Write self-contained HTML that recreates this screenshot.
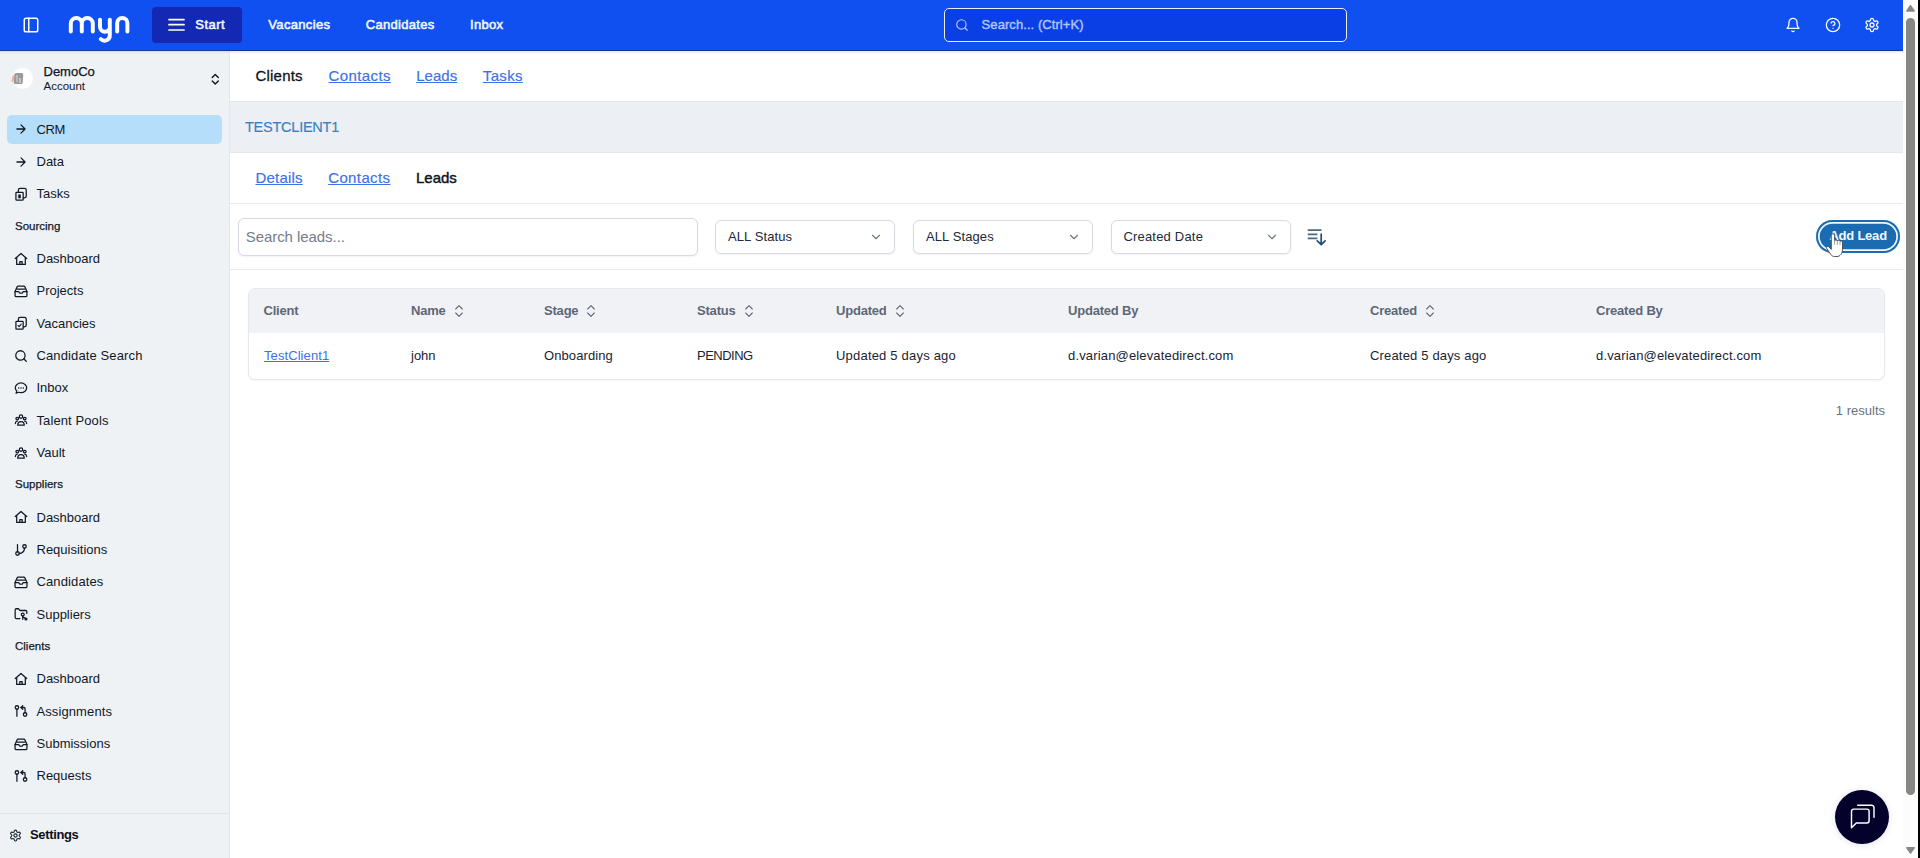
<!DOCTYPE html>
<html lang="en">
<head>
<meta charset="utf-8">
<title>myn - Leads</title>
<style>
*{box-sizing:border-box;margin:0;padding:0}
html,body{width:1920px;height:858px;overflow:hidden;background:#fff}
body{font-family:"Liberation Sans",sans-serif;color:#111827;position:relative;font-size:13px}
a{color:#3c71e8;text-decoration:underline}
.abs{position:absolute}
svg{display:block;overflow:visible}
.ic{fill:none;stroke:currentColor;stroke-linecap:round;stroke-linejoin:round}

/* ---------- top bar ---------- */
#topbar{position:absolute;left:0;top:0;width:1903px;height:51px;background:#1050f0;border-bottom:1px solid #17379a;box-shadow:0 1px 2px rgba(110,140,240,.28);z-index:5;color:#fff}
#topbar .t{position:absolute;white-space:nowrap;line-height:16px;font-size:13px;color:#f3f6ff;-webkit-text-stroke:.55px #f3f6ff}
#startbtn{position:absolute;left:152px;top:7px;width:90px;height:35.5px;border-radius:4px;background:#1429b3}
#gsearch{position:absolute;left:944px;top:8px;width:403px;height:34px;border:1.4px solid #e9efff;border-radius:5px;background:#0a3fe6}
#gsearch span{position:absolute;left:36.600px;letter-spacing:.07px;top:8px;line-height:16px;font-size:13px;color:#b3c6fb;white-space:nowrap;-webkit-text-stroke:.4px #b3c6fb}

/* ---------- sidebar ---------- */
#sidebar{position:absolute;left:0;top:51px;width:230px;height:807px;background:#eef2f5;border-right:1px solid #e4e8ec;color:#0f172a}
#sidebar .nav{position:absolute;left:7px;width:215px;height:28.7px;border-radius:5px}
#sidebar .nav.on{background:#b5defb;height:29.400px}
#sidebar .nav svg{position:absolute;left:7.200px;top:7.500px;width:14px;height:14px;stroke-width:2.150;color:#111827}
#sidebar .nav span{position:absolute;left:29.500px;top:7px;line-height:16px;font-size:13px;white-space:nowrap;color:#111827}
#sidebar .hd{position:absolute;left:15px;line-height:14px;font-size:11.5px;white-space:nowrap;color:#131a28;-webkit-text-stroke:.25px #131a28}
#sbfoot{position:absolute;left:0;top:762px;width:229px;height:45px;border-top:1px solid #dfe3ea}

/* ---------- main ---------- */
#main{position:absolute;left:230px;top:51px;width:1673px;height:807px;background:#fff}
.hline{position:absolute;left:0;width:1673px;height:1px;background:#e8eaee}
.tab{position:absolute;white-space:nowrap;font-size:15px;line-height:20px}
a.tab{-webkit-text-stroke:.18px #3c71e8}

#tband{position:absolute;left:0;top:50px;width:1673px;height:52px;background:#eceff4;border-top:1px solid #e4e7ed;border-bottom:1px solid #e4e7ed}
.inp{position:absolute;border:1px solid #d7dae0;border-radius:6px;background:#fff;box-shadow:0 1px 2px rgba(16,24,40,.05)}
.sel span{position:absolute;left:12px;top:7.500px;line-height:16px;font-size:13px;white-space:nowrap;color:#222938;letter-spacing:.1px}
.sel svg{position:absolute;right:11.500px;top:8.500px;width:14px;height:14px;stroke-width:1.900;color:#6b7380}
#tbl{position:absolute;left:18px;top:237px;width:1637px;height:92px;border:1px solid #e6e8ec;border-radius:7px;overflow:hidden;box-shadow:0 1px 2px rgba(16,24,40,.05);background:#fff}
#tbl .thead{position:absolute;left:0;top:0;width:100%;height:44px;background:#f1f2f5}
#tbl .th{position:absolute;top:13.500px;line-height:16px;font-size:13px;font-weight:bold;color:#5e6776;white-space:nowrap;letter-spacing:-.2px}
#tbl .th svg{position:absolute;left:100%;margin-left:5px;top:0;width:16px;height:16px;stroke-width:1.600;color:#5e6776}
#tbl .td{position:absolute;top:58.500px;line-height:16px;font-size:13px;color:#1c2330;white-space:nowrap}
</style>
</head>
<body>

<!-- ================= TOP BAR ================= -->
<div id="topbar">
  <svg class="abs ic" style="left:22px;top:16px;width:18px;height:18px;stroke-width:2" viewBox="0 0 24 24"><rect x="3" y="3" width="18" height="18" rx="2.5"/><path d="M9 3v18"/></svg>
  <!-- logo -->
  <svg class="abs" style="left:66px;top:12px" width="68" height="34" viewBox="66 12 68 34" fill="none" stroke="#fff" stroke-width="3.950" stroke-linecap="round" stroke-linejoin="round">
    <path d="M70.800 31.500V23.500a5.500 5.500 0 0 1 11 0V31.500M81.800 23.500a5.500 5.500 0 0 1 11 0V31.500"/>
    <path d="M100 19.600V26.800a4.900 4.900 0 0 0 9.800 0M109.800 19.600V35.400A5.300 5.300 0 0 1 100.800 39.200"/>
    <path d="M117.200 31.500V23a5.100 5.100 0 0 1 10.200 0V31.500"/>
  </svg>
  <div id="startbtn">
    <svg class="abs ic" style="left:16px;top:10px;width:17px;height:16px;stroke-width:1.7" viewBox="0 0 17 16"><path d="M1 2.6h15M1 7.7h15M1 13h15"/></svg>
    <div class="t" style="left:43.300px;top:9.500px;letter-spacing:.45px">Start</div>
  </div>
  <div class="t" style="left:268.300px;top:16.500px;letter-spacing:.33px">Vacancies</div>
  <div class="t" style="left:365.700px;top:16.500px;letter-spacing:.3px">Candidates</div>
  <div class="t" style="left:470px;top:16.500px;letter-spacing:.3px">Inbox</div>

  <div id="gsearch">
    <svg class="abs ic" style="left:10.300px;top:9.200px;width:14px;height:14px;stroke-width:1.900;color:#b9cbff" viewBox="0 0 24 24"><circle cx="11" cy="11" r="8"/><path d="m21 21-4.3-4.3"/></svg>
    <span>Search... (Ctrl+K)</span>
  </div>

  <!-- bell -->
  <svg class="abs ic" style="left:1785px;top:17px;width:16px;height:16px;stroke-width:1.9" viewBox="0 0 24 24"><path d="M6 8a6 6 0 0 1 12 0c0 7 3 9 3 9H3s3-2 3-9"/><path d="M10.3 21a1.94 1.94 0 0 0 3.4 0"/></svg>
  <!-- help -->
  <svg class="abs ic" style="left:1825px;top:17px;width:16px;height:16px;stroke-width:1.9" viewBox="0 0 24 24"><circle cx="12" cy="12" r="10"/><path d="M9.09 9a3 3 0 0 1 5.83 1c0 2-3 3-3 3"/><path d="M12 17h.01"/></svg>
  <!-- gear -->
  <svg class="abs ic" style="left:1864px;top:17px;width:16px;height:16px;stroke-width:1.9" viewBox="0 0 24 24"><path d="M12.22 2h-.44a2 2 0 0 0-2 2v.18a2 2 0 0 1-1 1.73l-.43.25a2 2 0 0 1-2 0l-.15-.08a2 2 0 0 0-2.73.73l-.22.38a2 2 0 0 0 .73 2.73l.15.1a2 2 0 0 1 1 1.72v.51a2 2 0 0 1-1 1.74l-.15.09a2 2 0 0 0-.73 2.73l.22.38a2 2 0 0 0 2.73.73l.15-.08a2 2 0 0 1 2 0l.43.25a2 2 0 0 1 1 1.73V20a2 2 0 0 0 2 2h.44a2 2 0 0 0 2-2v-.18a2 2 0 0 1 1-1.73l.43-.25a2 2 0 0 1 2 0l.15.08a2 2 0 0 0 2.73-.73l.22-.39a2 2 0 0 0-.73-2.73l-.15-.08a2 2 0 0 1-1-1.74v-.5a2 2 0 0 1 1-1.74l.15-.09a2 2 0 0 0 .73-2.73l-.22-.38a2 2 0 0 0-2.73-.73l-.15.08a2 2 0 0 1-2 0l-.43-.25a2 2 0 0 1-1-1.73V4a2 2 0 0 0-2-2z"/><circle cx="12" cy="12" r="3"/></svg>
</div>

<!-- ================= SIDEBAR ================= -->
<div id="sidebar">
  <!-- account switcher -->
  <div class="abs" style="left:12px;top:17.300px;width:20.800px;height:20.800px;border-radius:50%;background:radial-gradient(circle,#fff 0,#fff 70%,#f7f9fb 88%,#eef2f5 100%)"></div>
  <div class="abs" style="left:14.200px;top:22px;width:8.600px;height:10.800px;background:#999a9b;border-radius:1.500px;filter:blur(.7px);transform:skewX(-4deg)"></div>
  <div class="abs" style="left:16px;top:24px;width:2px;height:7px;background:#b9babb;filter:blur(.6px)"></div>
  <div class="abs" style="left:19.300px;top:26.500px;width:1.500px;height:5px;background:#c2c3c4;filter:blur(.5px)"></div>
  <div class="abs" style="left:11.600px;top:24px;width:2px;height:7px;background:#f1b08f;border-radius:1px;transform:skewX(-12deg);filter:blur(.5px)"></div>
  <div class="abs" id="acc1" style="left:43.5px;top:13px;line-height:16px;font-size:13px;white-space:nowrap;color:#10151f;-webkit-text-stroke:.25px #10151f">DemoCo</div>
  <div class="abs" id="acc2" style="left:43.5px;top:27.500px;line-height:14px;font-size:11.5px;white-space:nowrap;color:#10151f">Account</div>
  <svg class="abs ic" style="left:207.700px;top:20.900px;width:14.500px;height:14.500px;stroke-width:2.300;color:#10151f" viewBox="0 0 24 24"><path d="m7 15 5 5 5-5"/><path d="m7 9 5-5 5 5"/></svg>
  <div class="nav on" style="top:63.6px"><svg class="ic" viewBox="0 0 24 24"><path d="M5 12h14M12 5l7 7-7 7"/></svg><span style="letter-spacing:-.4px">CRM</span></div>
  <div class="nav" style="top:96.0px"><svg class="ic" viewBox="0 0 24 24"><path d="M5 12h14M12 5l7 7-7 7"/></svg><span>Data</span></div>
  <div class="nav" style="top:128.3px"><svg class="ic" viewBox="0 0 24 24"><rect x="3.300" y="9.200" width="12.400" height="13.400" rx="1.200"/><path d="M7.500 9V5.500a3 3 0 0 1 3-3h7.500a3 3 0 0 1 3 3V15.500a3 3 0 0 1-3 3h-2"/><rect x="8.200" y="13.400" width="2.800" height="5.400" fill="currentColor" stroke-width="1.200"/></svg><span>Tasks</span></div>
  <div class="hd" style="top:167.5px">Sourcing</div>
  <div class="nav" style="top:193.0px"><svg class="ic" viewBox="0 0 24 24"><path d="M2.200 11.300 12 2.600l9.800 8.700"/><path d="M4.600 9.600V21.300h14.800V9.600"/><path d="M10 21v-4.600h4V21"/></svg><span>Dashboard</span></div>
  <div class="nav" style="top:225.3px"><svg class="ic" viewBox="0 0 24 24"><path d="M1.800 13 5 5.400A2.600 2.600 0 0 1 7.400 3.800h9.200A2.600 2.600 0 0 1 19 5.400L22.200 13v6.600a2.200 2.200 0 0 1-2.200 2.200H4a2.200 2.200 0 0 1-2.200-2.200z"/><path d="M1.800 13.200h6.400l1.400 2.300h4.800l1.400-2.300h6.400"/><path d="M4.800 8.700h14.400"/></svg><span>Projects</span></div>
  <div class="nav" style="top:257.6px"><svg class="ic" viewBox="0 0 24 24"><rect x="3.300" y="9.200" width="12.400" height="13.400" rx="1.200"/><path d="M7.500 9V5.500a3 3 0 0 1 3-3h7.500a3 3 0 0 1 3 3V15.500a3 3 0 0 1-3 3h-2"/><path stroke-width="1.800" d="m6.800 16.200 2 2 3.600-4.200"/></svg><span>Vacancies</span></div>
  <div class="nav" style="top:290.0px"><svg class="ic" viewBox="0 0 24 24"><circle cx="11" cy="11" r="8"/><path d="m21 21-4.3-4.3"/></svg><span style="letter-spacing:.12px">Candidate Search</span></div>
  <div class="nav" style="top:322.3px"><svg class="ic" viewBox="0 0 24 24"><path d="M12 3.400c5.400 0 9.800 3.700 9.800 8.300S17.400 20 12 20c-1.400 0-2.700-.2-3.900-.7L3.600 21l1.200-4C3.200 15.600 2.200 13.700 2.200 11.700c0-4.600 4.400-8.300 9.800-8.300z"/><path stroke-width="2.600" d="M8 11.800h.01M12 11.800h.01M16 11.800h.01"/></svg><span>Inbox</span></div>
  <div class="nav" style="top:354.6px"><svg class="ic" viewBox="0 0 24 24"><circle cx="12" cy="6.200" r="2.900"/><circle cx="5.600" cy="9.600" r="2.300"/><circle cx="18.400" cy="9.600" r="2.300"/><path d="M6.400 20.800c0-3.600 2.400-6.200 5.600-6.200s5.600 2.600 5.600 6.200z"/><path d="M2.300 18c0-2.100 1.300-3.800 3.300-4.100M21.700 18c0-2.100-1.300-3.800-3.300-4.100"/></svg><span style="letter-spacing:.1px">Talent Pools</span></div>
  <div class="nav" style="top:387.0px"><svg class="ic" viewBox="0 0 24 24"><circle cx="12" cy="6.200" r="2.900"/><circle cx="5.600" cy="9.600" r="2.300"/><circle cx="18.400" cy="9.600" r="2.300"/><path d="M6.400 20.800c0-3.600 2.400-6.200 5.600-6.200s5.600 2.600 5.600 6.200z"/><path d="M2.300 18c0-2.100 1.300-3.800 3.300-4.100M21.700 18c0-2.100-1.300-3.800-3.300-4.100"/></svg><span>Vault</span></div>
  <div class="hd" style="top:426.2px">Suppliers</div>
  <div class="nav" style="top:451.6px"><svg class="ic" viewBox="0 0 24 24"><path d="M2.200 11.300 12 2.600l9.800 8.700"/><path d="M4.600 9.600V21.300h14.800V9.600"/><path d="M10 21v-4.600h4V21"/></svg><span>Dashboard</span></div>
  <div class="nav" style="top:484.0px"><svg class="ic" viewBox="0 0 24 24"><circle cx="18" cy="6" r="3"/><circle cx="6" cy="18" r="3"/><path d="M6 3v12"/><path d="M18 9a9 9 0 0 1-9 9"/></svg><span>Requisitions</span></div>
  <div class="nav" style="top:516.3px"><svg class="ic" viewBox="0 0 24 24"><path d="M1.800 13 5 5.400A2.600 2.600 0 0 1 7.400 3.800h9.200A2.600 2.600 0 0 1 19 5.400L22.200 13v6.600a2.200 2.200 0 0 1-2.200 2.200H4a2.200 2.200 0 0 1-2.200-2.200z"/><path d="M1.800 13.200h6.400l1.400 2.300h4.800l1.400-2.300h6.400"/><path d="M4.800 8.700h14.400"/></svg><span style="letter-spacing:.12px">Candidates</span></div>
  <div class="nav" style="top:548.6px"><svg class="ic" viewBox="0 0 24 24"><path d="M10 20H4a2 2 0 0 1-2-2V5a2 2 0 0 1 2-2h4l2 3h10a2 2 0 0 1 2 2v3"/><circle cx="15" cy="13" r="2.500"/><path d="M15 15.500V21"/><path d="m15 17 4 2"/><circle cx="20.500" cy="20.500" r="1.600"/></svg><span>Suppliers</span></div>
  <div class="hd" style="top:587.8px">Clients</div>
  <div class="nav" style="top:613.3px"><svg class="ic" viewBox="0 0 24 24"><path d="M2.200 11.300 12 2.600l9.800 8.700"/><path d="M4.600 9.600V21.300h14.800V9.600"/><path d="M10 21v-4.600h4V21"/></svg><span>Dashboard</span></div>
  <div class="nav" style="top:645.6px"><svg class="ic" viewBox="0 0 24 24"><circle cx="5" cy="6" r="3"/><path d="M5 9v12"/><circle cx="19" cy="18" r="3"/><path d="m15 9-3-3 3-3"/><path d="M12 6h5a2 2 0 0 1 2 2v7"/></svg><span style="letter-spacing:.1px">Assignments</span></div>
  <div class="nav" style="top:678.0px"><svg class="ic" viewBox="0 0 24 24"><path d="M1.800 13 5 5.400A2.600 2.600 0 0 1 7.400 3.800h9.200A2.600 2.600 0 0 1 19 5.400L22.200 13v6.600a2.200 2.200 0 0 1-2.200 2.200H4a2.200 2.200 0 0 1-2.200-2.200z"/><path d="M1.800 13.200h6.400l1.400 2.300h4.800l1.400-2.300h6.400"/><path d="M4.800 8.700h14.400"/></svg><span>Submissions</span></div>
  <div class="nav" style="top:710.3px"><svg class="ic" viewBox="0 0 24 24"><circle cx="5" cy="6" r="3"/><path d="M5 9v12"/><circle cx="19" cy="18" r="3"/><path d="m15 9-3-3 3-3"/><path d="M12 6h5a2 2 0 0 1 2 2v7"/></svg><span>Requests</span></div>
  <div id="sbfoot">
    <svg class="abs ic" style="left:8.700px;top:14.500px;width:13px;height:13px;stroke-width:2;color:#1b2333" viewBox="0 0 24 24"><path d="M12.22 2h-.44a2 2 0 0 0-2 2v.18a2 2 0 0 1-1 1.73l-.43.25a2 2 0 0 1-2 0l-.15-.08a2 2 0 0 0-2.73.73l-.22.38a2 2 0 0 0 .73 2.73l.15.1a2 2 0 0 1 1 1.72v.51a2 2 0 0 1-1 1.74l-.15.09a2 2 0 0 0-.73 2.73l.22.38a2 2 0 0 0 2.73.73l.15-.08a2 2 0 0 1 2 0l.43.25a2 2 0 0 1 1 1.730V20a2 2 0 0 0 2 2h.44a2 2 0 0 0 2-2v-.18a2 2 0 0 1 1-1.730l.43-.25a2 2 0 0 1 2 0l.15.08a2 2 0 0 0 2.730-.730l.22-.39a2 2 0 0 0-.730-2.730l-.15-.08a2 2 0 0 1-1-1.740v-.5a2 2 0 0 1 1-1.740l.15-.09a2 2 0 0 0 .730-2.730l-.22-.38a2 2 0 0 0-2.730-.730l-.15.08a2 2 0 0 1-2 0l-.43-.25a2 2 0 0 1-1-1.730V4a2 2 0 0 0-2-2z"/><circle cx="12" cy="12" r="3"/></svg>
    <div class="abs" id="settings" style="left:30px;top:12.500px;line-height:16px;font-size:13px;font-weight:bold;letter-spacing:-.35px;white-space:nowrap;color:#0b0f19">Settings</div>
  </div>
</div>

<!-- ================= MAIN ================= -->
<div id="main">
  <!-- primary tabs -->
  <div class="tab" id="t1" style="left:25.500px;top:15px;letter-spacing:.2px;color:#10141c;-webkit-text-stroke:.3px #10141c">Clients</div>
  <a class="tab" id="t2" style="left:98.600px;top:15px;letter-spacing:.38px">Contacts</a>
  <a class="tab" id="t3" style="left:186.200px;top:15px;letter-spacing:.05px">Leads</a>
  <a class="tab" id="t4" style="left:252.800px;top:15px;letter-spacing:.35px">Tasks</a>

  <div id="tband"><div class="abs" id="cname" style="left:15px;top:14.500px;line-height:20px;font-size:14.500px;letter-spacing:-.24px;color:#3a80c2;white-space:nowrap;-webkit-text-stroke:.15px #3a80c2">TESTCLIENT1</div></div>

  <!-- secondary tabs -->
  <a class="tab" id="s1" style="left:25.500px;top:117px;letter-spacing:.2px">Details</a>
  <a class="tab" id="s2" style="left:98.200px;top:117px;letter-spacing:.38px">Contacts</a>
  <div class="tab" id="s3" style="left:186px;top:117px;color:#10141c;-webkit-text-stroke:.45px #10141c">Leads</div>
  <div class="hline" style="top:152px"></div>

  <!-- filters -->
  <div class="inp" style="left:8px;top:167px;width:459.500px;height:38px"><span class="abs" id="ph" style="left:6.700px;top:8px;letter-spacing:-.06px;line-height:20px;font-size:15px;color:#767d88;white-space:nowrap">Search leads...</span></div>
  <div class="inp sel" style="left:485px;top:169px;width:180px;height:34px"><span>ALL Status</span><svg class="ic" viewBox="0 0 24 24"><path d="m6 9 6 6 6-6"/></svg></div>
  <div class="inp sel" style="left:683px;top:169px;width:180px;height:34px"><span>ALL Stages</span><svg class="ic" viewBox="0 0 24 24"><path d="m6 9 6 6 6-6"/></svg></div>
  <div class="inp sel" style="left:881px;top:169px;width:180px;height:34px"><span style="left:11.400px;letter-spacing:.2px">Created Date</span><svg class="ic" viewBox="0 0 24 24"><path d="m6 9 6 6 6-6"/></svg></div>
  <!-- sort icon -->
  <svg class="abs" style="left:1077px;top:177px" width="20" height="18" viewBox="1307 228 20 18" fill="none" stroke="#486a84" stroke-width="1.700"><path d="M1307.700 230.200h13.800M1307.700 234.300h9.700M1307.700 238.400h9.700"/><path stroke="#1d4f74" stroke-linecap="round" stroke-linejoin="round" d="M1321.200 234v10.500M1317.300 240.800l3.900 3.900 3.900-3.900"/></svg>
  <!-- add lead -->
  <div class="abs" id="addlead" style="left:1586px;top:169px;width:83.500px;height:32.500px;border-radius:17px;background:#1a6bb0;box-shadow:inset 0 0 0 2px #1a6bb0,inset 0 0 0 3.700px #f1f8ff"><span class="abs" id="addtxt" style="left:13.400px;top:8px;line-height:16px;font-size:13px;font-weight:bold;letter-spacing:-.22px;color:#f2f8ff;white-space:nowrap">Add Lead</span></div>
  <div class="hline" style="top:218px"></div>

  <!-- table -->
  <div id="tbl">
    <div class="thead"></div>
    <div class="th" style="left:14.500px">Client</div>
    <div class="th" style="left:162px">Name<svg class="ic" viewBox="0 0 24 24"><path d="m7 15 5 5 5-5"/><path d="m7 9 5-5 5 5"/></svg></div>
    <div class="th" style="left:295px">Stage<svg class="ic" viewBox="0 0 24 24"><path d="m7 15 5 5 5-5"/><path d="m7 9 5-5 5 5"/></svg></div>
    <div class="th" style="left:448px">Status<svg class="ic" viewBox="0 0 24 24"><path d="m7 15 5 5 5-5"/><path d="m7 9 5-5 5 5"/></svg></div>
    <div class="th" style="left:587px">Updated<svg class="ic" viewBox="0 0 24 24"><path d="m7 15 5 5 5-5"/><path d="m7 9 5-5 5 5"/></svg></div>
    <div class="th" style="left:819px">Updated By</div>
    <div class="th" style="left:1121px">Created<svg class="ic" viewBox="0 0 24 24"><path d="m7 15 5 5 5-5"/><path d="m7 9 5-5 5 5"/></svg></div>
    <div class="th" style="left:1347px">Created By</div>

    <a class="td" style="left:15px;color:#3c71e8;letter-spacing:.08px">TestClient1</a>
    <div class="td" style="left:162px">john</div>
    <div class="td" style="left:295px;letter-spacing:.1px">Onboarding</div>
    <div class="td" style="left:448px;letter-spacing:-.5px">PENDING</div>
    <div class="td" style="left:587px;letter-spacing:.2px">Updated 5 days ago</div>
    <div class="td" style="left:819px;letter-spacing:.16px">d.varian@elevatedirect.com</div>
    <div class="td" style="left:1121px;letter-spacing:.17px">Created 5 days ago</div>
    <div class="td" style="left:1347px;letter-spacing:.16px">d.varian@elevatedirect.com</div>
  </div>
  <div class="abs" id="results" style="right:18px;top:352px;line-height:16px;font-size:13px;color:#6a7280;white-space:nowrap">1 results</div>
</div>

<!-- chat launcher -->
<div class="abs" style="left:1835px;top:790px;width:54px;height:54px;border-radius:50%;background:#04022b;box-shadow:0 1px 6px rgba(70,60,150,.16);z-index:6">
  <svg class="abs" style="left:14px;top:13px" width="28" height="28" viewBox="0 0 28 28" fill="none" stroke="#fff" stroke-width="1.450" stroke-linejoin="round" stroke-linecap="round"><path d="M2.500 24.800V8.300a2.200 2.200 0 0 1 2.200-2.200h13.200a2.200 2.200 0 0 1 2.200 2.200v9.500a2.200 2.200 0 0 1-2.200 2.200H7.300z"/><path d="M8.700 2.300h14a2.300 2.300 0 0 1 2.300 2.300v9.600"/></svg>
</div>

<!-- page scrollbar -->
<div class="abs" style="left:1903px;top:0;width:15px;height:858px;background:#fcfcfc;z-index:7">
  <svg class="abs" style="left:0;top:0" width="15" height="858" viewBox="0 0 15 858"><path fill="#868685" stroke="#868685" stroke-width="1.400" stroke-linejoin="round" d="M3.800 11 7.500 5.600l3.700 5.400zM3.800 847.800 7.500 853.200l3.700-5.400z"/></svg>
  <div class="abs" style="left:3px;top:18px;width:9px;height:777px;border-radius:4.500px;background:#868685"></div>
</div>
<div class="abs" style="left:1918px;top:0;width:2px;height:858px;background:#000;z-index:8"></div>

<!-- mouse pointer (hand) -->
<svg class="abs" style="left:1824px;top:231px;z-index:9" width="22" height="28" viewBox="1824 231 22 28"><path d="M1831.300 235.400a1.650 1.650 0 0 1 3.300 0V240.500c.3-.7 2.400-.6 2.700.2.400-.6 2.400-.4 2.700.5.500-.5 2.300-.2 2.500.9V249.500c0 4-2.500 7-5.500 7h-2.400c-1.800 0-3-.8-4-2.300l-3.900-5.800c-.8-1.200.9-2.700 2-1.600l2.600 2.600z" fill="#fff" stroke="#4b515c" stroke-width="1" stroke-linejoin="round"/><path d="M1834.600 240.500v4.300M1837.300 240.900v3.900M1840 241.400v3.400" stroke="#6d7380" stroke-width=".7" fill="none"/></svg>

</body>
</html>
